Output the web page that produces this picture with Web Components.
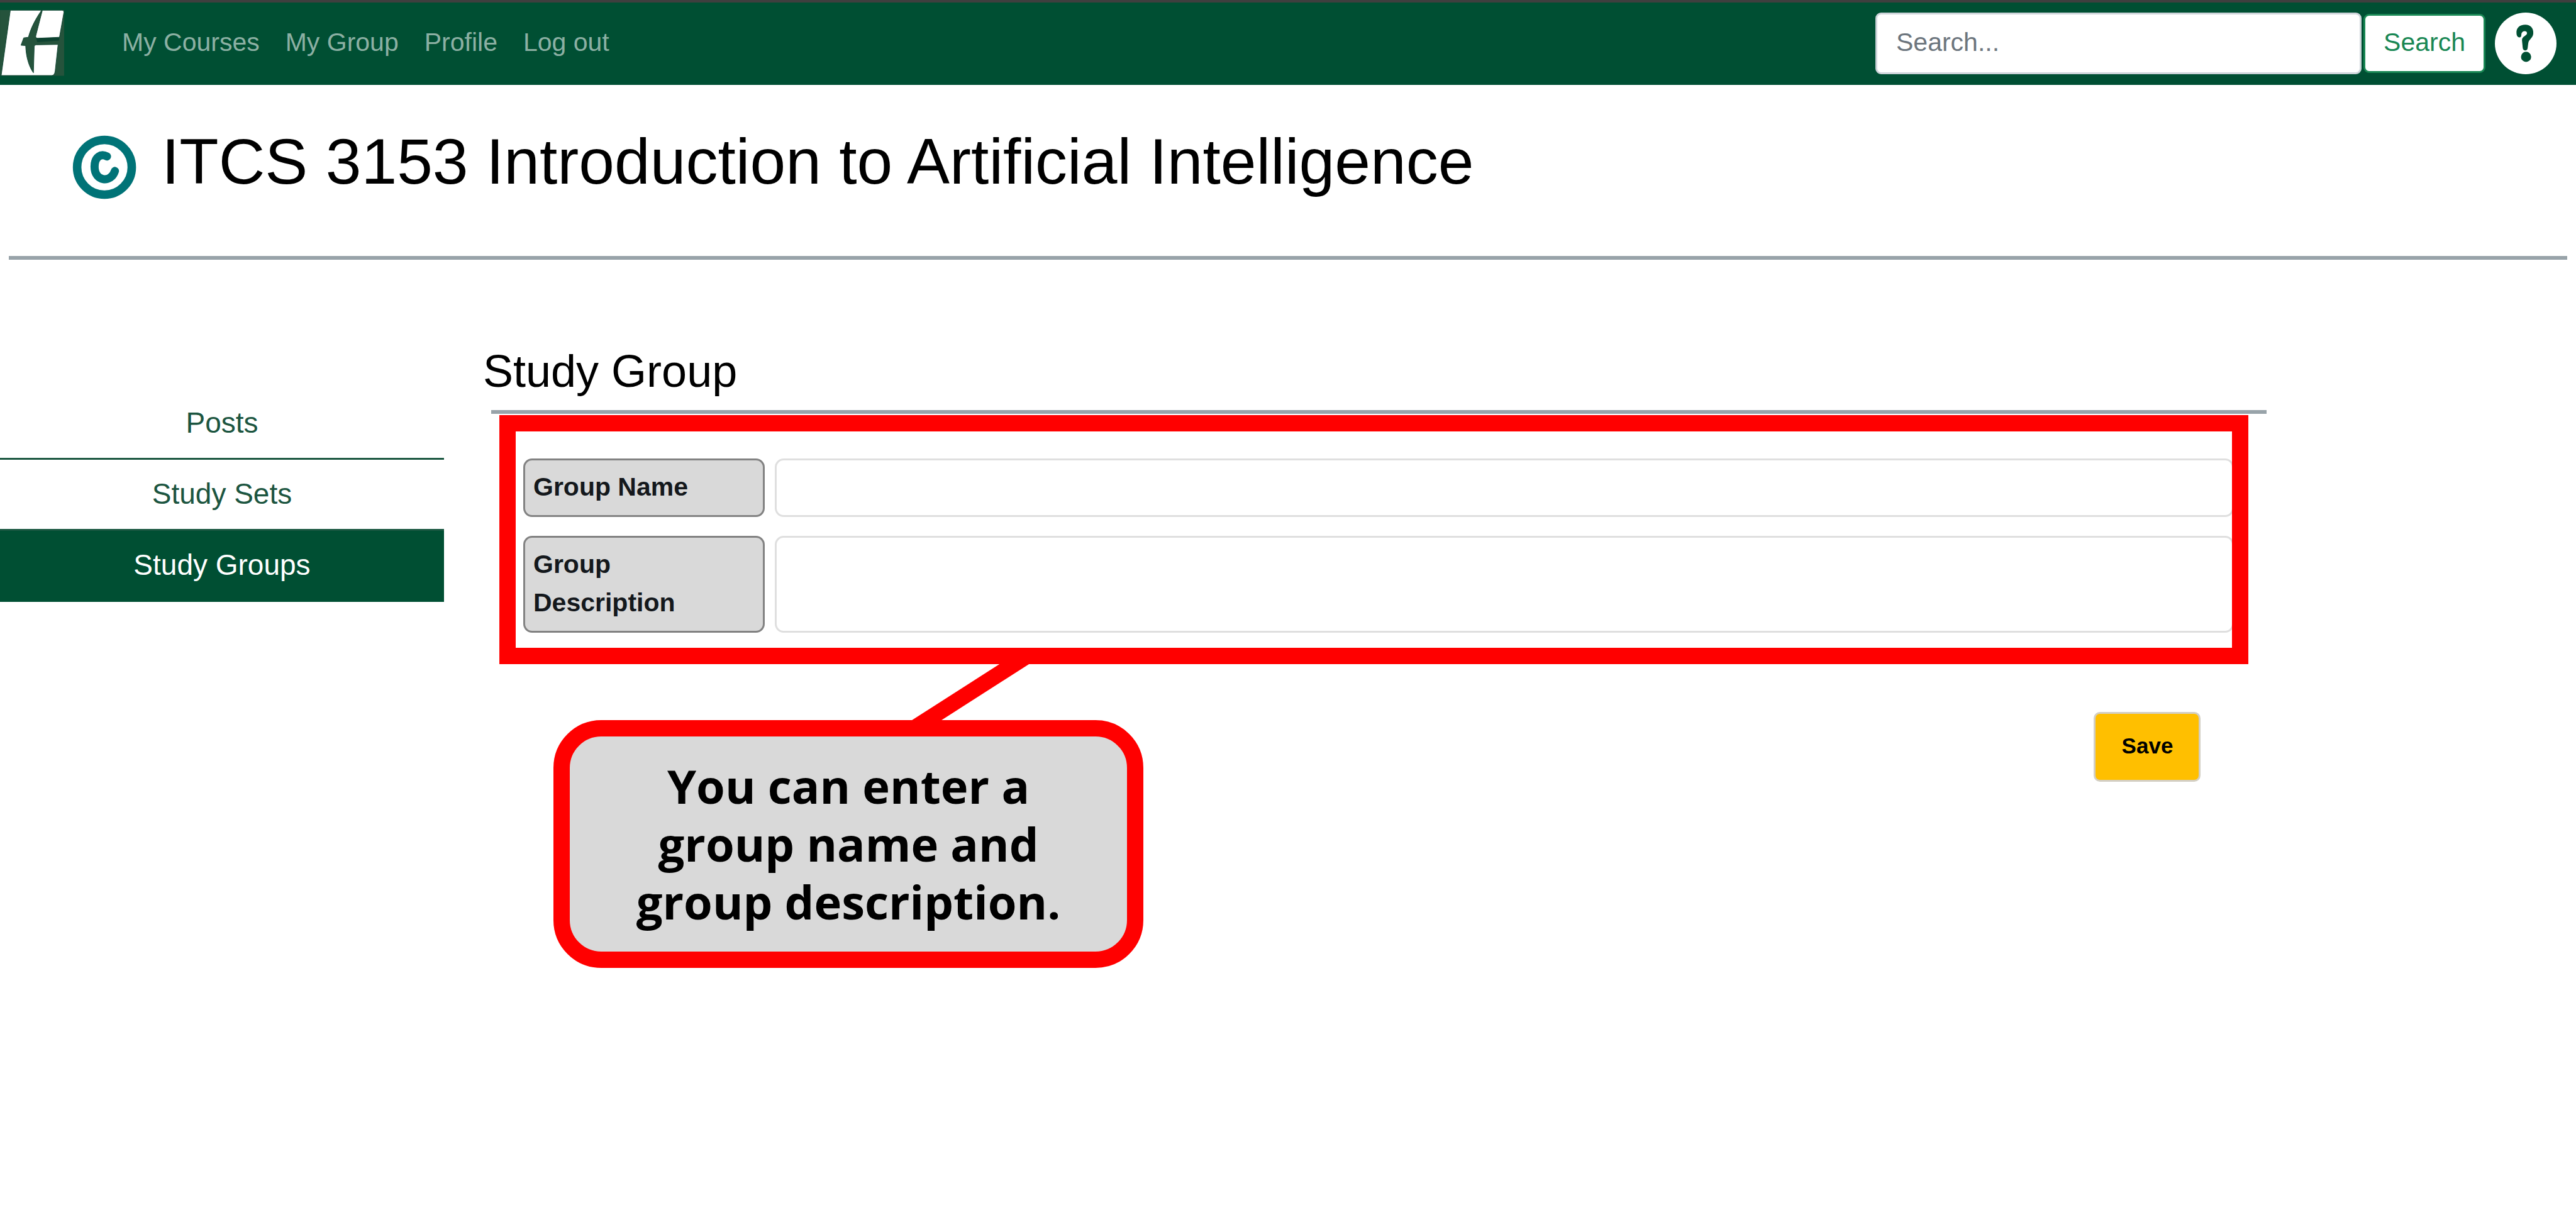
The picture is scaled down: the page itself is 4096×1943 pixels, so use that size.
<!DOCTYPE html>
<html lang="en">
<head>
<meta charset="utf-8">
<title>ITCS 3153 Introduction to Artificial Intelligence</title>
<style>
  body {
    margin: 0;
    min-height: 100vh;
    background: #fff;
    font-family: "Liberation Sans", Arial, sans-serif;
    --green: #004f33;
    --rule: #98a3a9;
    --text: 41px;
  }
  .columns { display: flex; align-items: flex-start; }
  main { flex: 1; min-width: 0; padding: 134px 12% 0 62px; }
</style>
</head>
<body>
<site-header></site-header>
<course-title>ITCS 3153 Introduction to Artificial Intelligence</course-title>
<div class="columns">
  <side-nav>
    <side-link>Posts</side-link>
    <side-link>Study Sets</side-link>
    <side-link active>Study Groups</side-link>
  </side-nav>
  <main>
    <group-form heading="Study Group">
      <form-field label="Group Name"></form-field>
      <form-field label="Group Description" multiline></form-field>
      <callout-note slot="note">You can enter a group name and group description.</callout-note>
    </group-form>
  </main>
</div>

<script>
class BaseElement extends HTMLElement {
  connectedCallback() {
    if (this.shadowRoot) return;
    this.attachShadow({ mode: "open" }).innerHTML =
      `<style>*{box-sizing:border-box}${this.styles()}</style>${this.markup()}`;
  }
}

customElements.define("site-header", class extends BaseElement {
  styles() { return `
    :host { display: block; border-top: 4px solid #3f3f3f; background: var(--green); font-size: var(--text); }
    header { display: flex; align-items: center; padding: 12px 31px 14px 0; }
    svg { display: block; flex: none; }
    .logo { width: 102px; height: 105px; }
    nav { display: flex; gap: 41px; margin-left: 92px; padding-bottom: 3px; line-height: 62px; }
    nav a { color: #8cb0a3; text-decoration: none; }
    form { display: flex; align-items: center; gap: 3px; margin: 0 15px 0 auto; }
    input, button { font: inherit; border-radius: 9px; background: #fff; }
    input { width: 773px; height: 98px; padding: 0 30px 3px; border: 3px solid #ced4da; outline: 0; }
    input::placeholder { color: #6c757d; opacity: 1; }
    button { width: 194px; height: 94px; padding: 0 0 3px; border: 3px solid #198754; color: #198754; }
    .help { display: block; }
    .help svg { width: 98px; height: 98px; }`; }
  markup() { return `
    <header>
      <a href="#" aria-label="Home">
        <svg class="logo" viewBox="0 57 330 340">
          <path fill="#25533c" d="M0 57H330V395H0z"/>
          <path fill="#fff" stroke="#0d4230" stroke-width="3" d="M53 58H214C185 100 160 145 146 197L122 200L108 238L132 240C134 300 150 350 172 380L176 246Q176 236 186 236L299 234L284 370Q281 394 266 394H6z"/>
          <path fill="#fff" stroke="#0d4230" stroke-width="3" d="M218 58H320Q330 58 329 68L306 197L196 202Q182 203 184 190z"/>
          <path fill="#0d4230" d="M186 203L306 198L303 214L192 222z"/>
        </svg>
      </a>
      <nav><a href="#">My Courses</a><a href="#">My Group</a><a href="#">Profile</a><a href="#">Log out</a></nav>
      <form><input type="text" placeholder="Search..." aria-label="Search"><button type="button">Search</button></form>
      <a class="help" href="#" aria-label="Help">
        <svg viewBox="66 64 316 316">
          <circle cx="224" cy="222" r="158" fill="#fff"/>
          <path fill="#004f33" d="M177 172C174 142 193 126 222 126C249 126 264 144 263 170C262 196 240 200 237 222L234 246C233 262 211 262 209 246L205 206C204 186 230 184 231 170C231 155 208 155 203 170C200 180 204 190 194 191C184 192 178 184 177 172z"/>
          <circle cx="226" cy="291" r="26" fill="#004f33"/>
        </svg>
      </a>
    </header>`; }
});

customElements.define("course-title", class extends BaseElement {
  styles() { return `
    :host { display: block; }
    div { display: flex; align-items: flex-end; gap: 37px; padding: 60px 114px 88px; }
    svg { flex: none; width: 106px; height: 106px; }
    h1 { margin: 0; font-size: 102px; line-height: 124px; font-weight: 400; color: #000; }
    hr { height: 6px; margin: 0 14px; border: 0; background: var(--rule); }`; }
  markup() { return `
    <div>
      <svg viewBox="36 36 344 344" fill="none" stroke="#007377" stroke-linecap="round" aria-hidden="true">
        <circle cx="205" cy="208" r="141" stroke-width="44"/>
        <path stroke-width="42" d="M218 152C188 136 154 152 154 205C154 284 240 290 259 227"/>
      </svg>
      <h1><slot></slot></h1>
    </div>
    <hr>`; }
});

customElements.define("side-nav", class extends BaseElement {
  styles() { return `:host { display: block; flex: none; width: 706px; padding-top: 205px; }`; }
  markup() { return `<nav><slot></slot></nav>`; }
});

customElements.define("side-link", class extends BaseElement {
  styles() { return `
    :host { display: block; }
    a { display: block; padding-bottom: 2px; border-bottom: 3px solid #1a5741; font-size: 46px; line-height: 108px; text-align: center; text-decoration: none; color: #1c5540; }
    :host([active]) a { background: var(--green); border-color: var(--green); color: #fff; }`; }
  markup() { return `<a href="#"><slot></slot></a>`; }
});

customElements.define("group-form", class extends BaseElement {
  styles() { return `
    :host { display: block; }
    h2 { margin: 0 0 19px; font-size: 72px; line-height: 86px; font-weight: 400; color: #000; }
    hr { height: 6px; margin: 0 0 2px 13px; border: 0; background: var(--rule); }
    .frame { position: relative; display: flex; flex-direction: column; gap: 30px; margin: 0 29px 0 26px; padding: 69px 23px 50px 38px; }
    .frame::after { content: ""; position: absolute; inset: 0; border: 26px solid #f00; pointer-events: none; }
    .actions { display: flex; justify-content: flex-end; padding: 76px 105px 0 0; }
    button { width: 170px; height: 111px; padding: 0 0 3px; border: 3px solid #d3cfc4; border-radius: 10px; background: #ffbf00; color: #000; font: 700 35px/40px "Liberation Sans", Arial, sans-serif; }`; }
  markup() { return `
    <h2>${this.getAttribute("heading")}</h2>
    <hr>
    <form>
      <div class="frame"><slot></slot><slot name="note"></slot></div>
      <div class="actions"><button type="button">Save</button></div>
    </form>`; }
});

customElements.define("form-field", class extends BaseElement {
  styles() { return `
    :host { display: flex; gap: 16px; font-size: var(--text); line-height: 61px; }
    label { flex: none; width: 384px; padding: 12px 80px 14px 13px; border: 3px solid #828282; border-radius: 14px; background: #d9d9d9; color: #14181c; font-weight: 700; }
    input, textarea { flex: 1; min-width: 0; padding: 13px 30px; border: 3px solid #dfdfdf; border-radius: 14px; background: #fff; font: inherit; resize: none; outline: 0; overflow: hidden; }`; }
  markup() {
    const control = this.hasAttribute("multiline") ? `<textarea id="control" rows="2"></textarea>` : `<input id="control" type="text">`;
    return `<label for="control">${this.getAttribute("label")}</label>${control}`;
  }
});

customElements.define("callout-note", class extends BaseElement {
  styles() { return `
    :host { position: absolute; z-index: 2; top: 485px; left: 86px; width: 938px; box-sizing: border-box; padding: 33px 76px; border: 26px solid #f00; border-radius: 76px; background: #d9d9d9; }
    p { margin: 0; color: #000; font: 700 74px/92px "Open Sans", "Noto Sans", sans-serif; text-align: center; }
    svg { position: absolute; left: 530px; bottom: 100%; margin-bottom: 24px; width: 220px; height: 96px; }`; }
  markup() { return `
    <svg viewBox="0 0 220 96" aria-hidden="true"><path fill="#f00" d="M161 0H208L58 96H11z"/></svg>
    <p><slot></slot></p>`; }
});
</script>
</body>
</html>
